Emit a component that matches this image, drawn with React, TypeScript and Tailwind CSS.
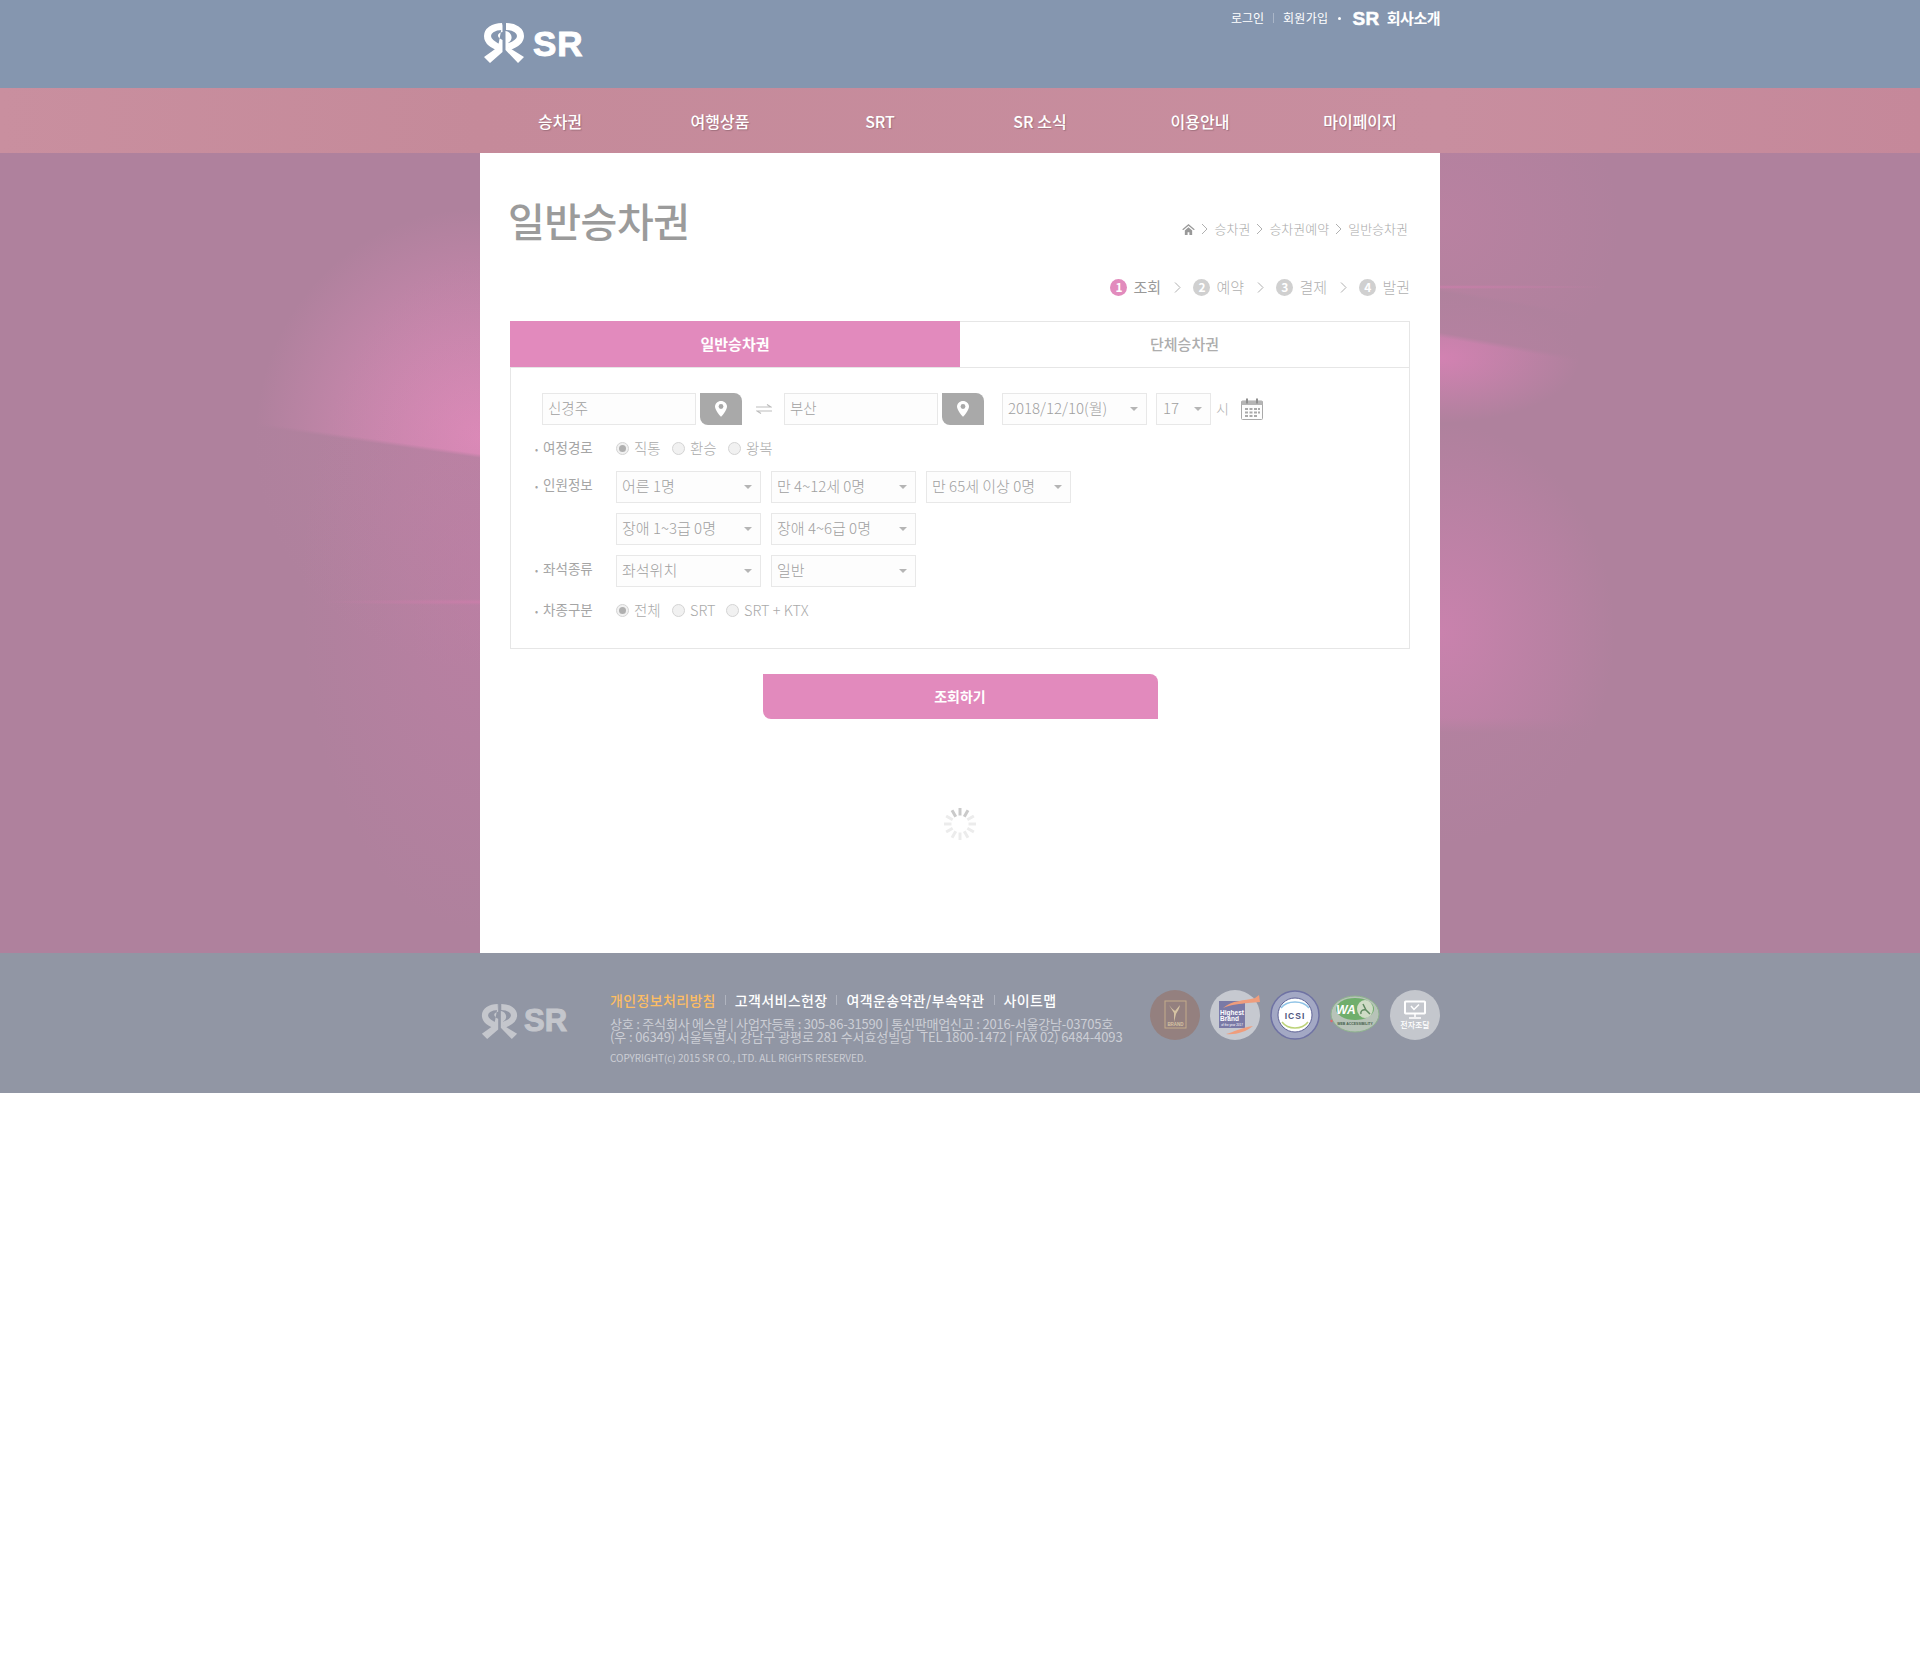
const font = "font-['Noto_Sans_CJK_KR','Noto_Sans',sans-serif]"

function LogoMark({ className, color }: { className: string; color: string }) {
  return (
    <svg viewBox="0 0 42 40" className={className} fill="none">
      <path d="M19 3.500 C10 3.500 4.500 8 4.500 13 C4.500 19 10 22 17 25" stroke={color} strokeWidth="7" />
      <path d="M23 3.500 C32 3.500 37.500 8 37.500 13 C37.500 19 31 22 25 24" stroke={color} strokeWidth="7" />
      <path d="M19.500 0 L19.500 9 C14 10 13 14 19.500 17 L19.500 29 L7 40 L1 34 L15 24 Z" fill={color} />
      <path d="M22.500 8 L22.500 27 L35 40 L41 34 L25 24 L25 20 C31 17 29 9 22.500 8 Z" fill={color} />
    </svg>
  )
}

function Chevron({ className }: { className: string }) {
  return (
    <svg viewBox="0 0 7 12" className={className} fill="none" stroke="#b0b0b0" strokeWidth="1">
      <path d="M1 1 L6 6 L1 11" />
    </svg>
  )
}

function Pin() {
  return (
    <button className="w-[42px] h-[32px] bg-[#a9a9a9] rounded-tr-lg rounded-bl-lg flex items-center justify-center">
      <svg viewBox="0 0 12 16" className="w-[12px] h-[16px]">
        <path d="M6 0 C2.700 0 0 2.500 0 5.600 C0 9.500 6 16 6 16 C6 16 12 9.500 12 5.600 C12 2.500 9.300 0 6 0 Z" fill="#fff" />
        <circle cx="6" cy="5.500" r="2.400" fill="#a9a9a9" />
      </svg>
    </button>
  )
}

function TextBox({ value }: { value: string }) {
  return (
    <div className="w-[154px] h-[32px] bg-[#fdfdfd] border border-[#e8e8e8] pl-[5px] text-[14.500px] font-light leading-[28px] text-[#a0a0a0]">{value}</div>
  )
}

function Select({ value, className }: { value: string; className: string }) {
  return (
    <div className={`h-[32px] bg-[#fdfdfd] border border-[#e8e8e8] pl-[5px] pr-[8px] pb-[2px] flex items-center justify-between text-[15px] font-light text-[#a0a0a0] ${className}`}>
      <span className="whitespace-nowrap">{value}</span>
      <span className="mt-[2px] w-0 h-0 border-x-[4px] border-x-transparent border-t-[4px] border-t-[#b5b5b5]" />
    </div>
  )
}

function Radio({ label, checked, className }: { label: string; checked?: boolean; className: string }) {
  return (
    <div className={`flex items-center gap-[5px] ${className}`}>
      <span className="w-[13px] h-[13px] rounded-full border border-[#d4d4d4] bg-[#f1f1f1] flex items-center justify-center">
        {checked && <span className="w-[7px] h-[7px] rounded-full bg-[#b0b0b0]" />}
      </span>
      <span className="text-[14.500px] font-light text-[#aaaaaa] whitespace-nowrap">{label}</span>
    </div>
  )
}

function RowLabel({ text, className }: { text: string; className?: string }) {
  return (
    <div className={`w-[82px] shrink-0 pl-[1px] text-[13.500px] leading-[20px] text-[#a5a5a5] whitespace-nowrap ${className ?? ''}`}>
      <span className="text-[9px] mr-[5px]">•</span>{text}
    </div>
  )
}

function Step({ n, label, active }: { n: number; label: string; active?: boolean }) {
  return (
    <div className="flex items-center gap-[6px]">
      <span className={`w-[17px] h-[17px] rounded-full flex items-center justify-center text-[12px] font-bold text-white ${active ? 'bg-[#e28bbd]' : 'bg-[#d0d0d0]'}`}>{n}</span>
      <span className={`text-[15px] ${active ? 'text-[#999999] font-normal' : 'text-[#b0b0b0] font-light'}`}>{label}</span>
    </div>
  )
}

function Spinner() {
  return (
    <svg viewBox="0 0 34 34" className="w-[34px] h-[34px] mx-auto mt-[88px]">
      {Array.from({ length: 12 }).map((_, i) => (
        <line
          key={i}
          x1="17"
          y1="1"
          x2="17"
          y2="8.500"
          strokeWidth="3"
          stroke={i === 0 || i === 1 || i === 11 ? '#cacaca' : '#ececec'}
          transform={`rotate(${i * 30} 17 17)`}
        />
      ))}
    </svg>
  )
}

function Badges() {
  return (
    <div className="flex gap-[10px]">
      <svg viewBox="0 0 50 50" className="w-[50px] h-[50px]">
        <circle cx="25" cy="25" r="25" fill="#94807f" />
        <rect x="15" y="11" width="21" height="27" fill="none" stroke="#c4ab8b" strokeWidth="1" />
        <path d="M19 15 C22 19 24 20 25 21 L30 15 C29 20 27 22 26 24 L24 32 L24 23 Z" fill="#d6c3a3" />
        <text x="25.500" y="36" textAnchor="middle" fontSize="4.500" fontWeight="700" fill="#d6c3a3" fontFamily="Liberation Sans">BRAND</text>
      </svg>
      <svg viewBox="0 0 50 50" className="w-[50px] h-[50px] overflow-visible">
        <circle cx="25" cy="25" r="25" fill="#c6c9d0" />
        <rect x="9" y="11" width="26" height="27" fill="#7a7aa6" />
        <path d="M13 18 C22 10 34 11 45 8 L49 5 L50 12 L38 13 C30 14 22 14 13 18 Z" fill="#ef9d7c" />
        <path d="M16 44 C24 42 30 38 43 36 C36 42 25 45 16 44 Z" fill="#ef9d7c" />
        <text x="22" y="25" textAnchor="middle" fontSize="6.500" fontWeight="700" fill="#fff" fontFamily="Liberation Sans">Highest</text>
        <text x="19.500" y="31" textAnchor="middle" fontSize="6.500" fontWeight="700" fill="#fff" fontFamily="Liberation Sans">Brand</text>
        <text x="22" y="36" textAnchor="middle" fontSize="3" fill="#fff" fontFamily="Liberation Sans">of the year 2017</text>
      </svg>
      <svg viewBox="0 0 50 50" className="w-[50px] h-[50px]">
        <circle cx="25" cy="25" r="24" fill="#a3a8c4" stroke="#6f72a3" strokeWidth="1.500" />
        <circle cx="25" cy="25" r="17" fill="#ffffff" stroke="#5e6296" strokeWidth="1" />
        <path d="M11 18 C17 10 33 10 39 18" fill="none" stroke="#8fc3e6" strokeWidth="1.500" />
        <path d="M12 32 C18 40 32 40 38 32" fill="none" stroke="#bdd37a" strokeWidth="1.500" />
        <text x="25" y="28.500" textAnchor="middle" fontSize="8.500" fontWeight="700" letterSpacing="1" fill="#4f5680" fontFamily="Liberation Sans">ICSI</text>
      </svg>
      <svg viewBox="0 0 50 50" className="w-[50px] h-[50px]">
        <ellipse cx="25" cy="24" rx="24" ry="18" fill="#b7c3b8" stroke="#8db28d" strokeWidth="1" />
        <ellipse cx="25" cy="19" rx="19" ry="11" fill="#6fae6c" />
        <ellipse cx="35" cy="19" rx="8" ry="9" fill="#cfdcc6" />
        <path d="M33 14 L36 20 L40 24 M36 20 C33 19 30 21 31 24" fill="none" stroke="#5f8a61" strokeWidth="1.500" />
        <text x="16" y="24" textAnchor="middle" fontSize="12" fontWeight="700" fontStyle="italic" fill="#fff" fontFamily="Liberation Sans">WA</text>
        <text x="25" y="35" textAnchor="middle" fontSize="3.500" fontWeight="700" fill="#465f4c" fontFamily="Liberation Sans">WEB ACCESSIBILITY</text>
        <circle cx="1.500" cy="31" r="1.200" fill="#e0686a" />
      </svg>
      <div className="w-[50px] h-[50px] rounded-full bg-[#c4c7cd] flex flex-col items-center pt-[10px]">
        <svg viewBox="0 0 24 20" className="w-[24px] h-[20px]" fill="none">
          <rect x="1.500" y="1" width="21" height="13" rx="1" fill="#fff" stroke="#fff" />
          <rect x="3" y="2.500" width="18" height="10" fill="#c4c7cd" />
          <path d="M8 6 L11 9.500 L16 4.500" stroke="#fff" strokeWidth="1.500" />
          <path d="M12 14 L12 17 M6 18 L18 18" stroke="#fff" strokeWidth="1.500" />
        </svg>
        <span className="text-[8px] leading-[10px] text-white font-medium">전자조달</span>
      </div>
    </div>
  )
}

export default function App() {
  return (
    <div className={`w-full ${font}`}>
      {/* top bar */}
      <header className="h-[88px] bg-[#8596af]">
        <div className="w-[960px] h-full mx-auto flex justify-between">
          <div className="flex items-center pl-[3px] pb-[2px] gap-[8px]">
            <LogoMark className="w-[42px] h-[40px]" color="#ffffff" />
            <span className="font-['Liberation_Sans',sans-serif] font-bold text-[35px] leading-none text-white tracking-[1px] [-webkit-text-stroke:1px_#ffffff]">SR</span>
          </div>
          <div className="flex items-center h-[36px] text-[12px] text-white">
            <span>로그인</span>
            <span className="w-px h-[10px] bg-[#aab6c8] mx-[9px]" />
            <span className="tracking-[0.300px]">회원가입</span>
            <span className="w-[3px] h-[3px] rounded-full bg-white ml-[10px] mr-[11px]" />
            <span className="font-['Liberation_Sans',sans-serif] font-bold text-[19px] leading-none tracking-[0.500px] mr-[7px] [-webkit-text-stroke:0.500px_#ffffff]">SR</span>
            <span className="text-[15px] font-bold tracking-[-0.500px]">회사소개</span>
          </div>
        </div>
      </header>

      {/* nav */}
      <nav className="h-[65px] bg-[linear-gradient(90deg,#c98f9f,#c58a9a_25%,#c88e9f_75%,#c5889a)]">
        <div className="w-[960px] h-full mx-auto grid grid-cols-6 items-center text-center text-[16px] font-medium text-white [text-shadow:1px_1px_1px_rgba(90,60,70,0.35)]">
          <a>승차권</a>
          <a>여행상품</a>
          <a>SRT</a>
          <a>SR 소식</a>
          <a>이용안내</a>
          <a>마이페이지</a>
        </div>
      </nav>

      {/* body */}
      <main className="h-[800px] flex">
        <div className="flex-1 bg-[#af819d] bg-[image:radial-gradient(ellipse_160px_3px_at_100%_449px,rgba(215,125,175,0.5),transparent),radial-gradient(ellipse_180px_340px_at_100%_440px,rgba(200,125,170,0.42),transparent),linear-gradient(188deg,transparent_298px,rgba(175,129,157,0.85)_302px),radial-gradient(ellipse_225px_230px_at_100%_285px,#e08dbb,transparent)]" />
        <section className="w-[960px] bg-white px-[30px] pt-[44px]">
          <div className="flex justify-between items-end">
            <h1 className="-ml-[2px] text-[40px] leading-[46px] font-medium tracking-[-0.500px] text-[#9b9b9b]">일반승차권</h1>
            <div className="flex items-center gap-[6px] pb-[4px] pr-[2px] text-[13px] font-light leading-[20px] text-[#aaaaaa]">
              <svg viewBox="0 0 14 12" className="w-[13px] h-[11px]">
                <path d="M7 0 L14 6 L12.500 6.500 L7 2 L1.500 6.500 L0 6 Z M3 7 L7 3.500 L11 7 L11 12 L8 12 L8 9 L6 9 L6 12 L3 12 Z" fill="#999999" />
              </svg>
              <Chevron className="w-[7px] h-[12px]" />
              <span>승차권</span>
              <Chevron className="w-[7px] h-[12px]" />
              <span>승차권예약</span>
              <Chevron className="w-[7px] h-[12px]" />
              <span>일반승차권</span>
            </div>
          </div>

          {/* steps */}
          <div className="flex justify-end items-center h-[20px] mt-[34px] gap-[12.700px]">
            <Step n={1} label="조회" active />
            <Chevron className="w-[7px] h-[13px]" />
            <Step n={2} label="예약" />
            <Chevron className="w-[7px] h-[13px]" />
            <Step n={3} label="결제" />
            <Chevron className="w-[7px] h-[13px]" />
            <Step n={4} label="발권" />
          </div>

          {/* form */}
          <div className="mt-[24px] h-[328px] border border-[#e6e6e6]">
            <div className="flex h-[46px] -mt-px -ml-px border-b border-[#e6e6e6] box-content">
              <div className="w-[450px] bg-[#e28abd] text-white text-[15px] font-bold flex items-center justify-center">일반승차권</div>
              <div className="flex-1 text-[#adadad] text-[15px] font-medium flex items-center justify-center">단체승차권</div>
            </div>
            <div className="pl-[23px] pt-[25px]">
              <div className="flex items-center pl-[8px]">
                <TextBox value="신경주" />
                <div className="ml-[4px]"><Pin /></div>
                <svg viewBox="0 0 16 10" className="w-[16px] h-[10px] ml-[14px] mr-[12px]" fill="none" stroke="#bdbdbd" strokeWidth="1.200">
                  <path d="M0 3 L15 3 L11 0.500 M16 7 L1 7 L5 9.500" />
                </svg>
                <TextBox value="부산" />
                <div className="ml-[4px] mr-[18px]"><Pin /></div>
                <Select value="2018/12/10(월)" className="w-[145px]" />
                <Select value="17" className="w-[55px] ml-[9px] pl-[6px]" />
                <span className="ml-[5px] pb-[2px] text-[14px] font-light text-[#b0b0b0]">시</span>
                <svg viewBox="0 0 22 22" className="w-[22px] h-[22px] ml-[12px]">
                  <rect x="0.500" y="3" width="21" height="18.500" rx="1" fill="#fdfdfd" stroke="#a9a9a9" />
                  <rect x="0.500" y="3" width="21" height="4" fill="#b5b5b5" />
                  <rect x="5" y="0.500" width="2" height="5" fill="#8e8e8e" />
                  <rect x="15" y="0.500" width="2" height="5" fill="#8e8e8e" />
                  <path d="M4 10h3v2H4zM8.500 10h3v2h-3zM13 10h3v2h-3zM17 10h2v2h-2zM4 13.500h3v2H4zM8.500 13.500h3v2h-3zM13 13.500h3v2h-3zM17 13.500h2v2h-2zM4 17h3v2H4zM8.500 17h3v2h-3zM13 17h3v2h-3z" fill="#a9a9a9" />
                </svg>
              </div>

              <div className="flex items-center h-[20px] mt-[13px]">
                <RowLabel text="여정경로" />
                <Radio label="직통" checked className="w-[56px]" />
                <Radio label="환승" className="w-[56px]" />
                <Radio label="왕복" className="w-[56px]" />
              </div>

              <div className="flex mt-[13px]">
                <RowLabel text="인원정보" className="pt-[3px]" />
                <div className="flex flex-col gap-[10px]">
                  <div className="flex gap-[10px]">
                    <Select value="어른 1명" className="w-[145px]" />
                    <Select value="만 4~12세 0명" className="w-[145px]" />
                    <Select value="만 65세 이상 0명" className="w-[145px]" />
                  </div>
                  <div className="flex gap-[10px]">
                    <Select value="장애 1~3급 0명" className="w-[145px]" />
                    <Select value="장애 4~6급 0명" className="w-[145px]" />
                  </div>
                </div>
              </div>

              <div className="flex mt-[10px]">
                <RowLabel text="좌석종류" className="pt-[3px]" />
                <div className="flex gap-[10px]">
                  <Select value="좌석위치" className="w-[145px]" />
                  <Select value="일반" className="w-[145px]" />
                </div>
              </div>

              <div className="flex items-center h-[20px] mt-[13px]">
                <RowLabel text="차종구분" />
                <Radio label="전체" checked className="w-[56px]" />
                <Radio label="SRT" className="w-[54px]" />
                <Radio label="SRT + KTX" className="w-[100px]" />
              </div>
            </div>
          </div>

          <button className="block mx-auto mt-[25px] w-[395px] h-[45px] bg-[#e28abd] rounded-tr-lg rounded-bl-lg text-white text-[14px] font-bold">조회하기</button>
          <Spinner />
        </section>
        <div className="flex-1 bg-[#af819d] bg-[image:radial-gradient(ellipse_170px_2px_at_0%_134px,rgba(212,125,175,0.6),transparent),linear-gradient(190deg,transparent_216px,rgba(175,129,157,0.8)_220px,rgba(175,129,157,0.8)_260px,transparent_265px),linear-gradient(180deg,transparent_565px,rgba(175,129,157,0.75)_580px),radial-gradient(ellipse_140px_65px_at_0%_205px,rgba(214,130,180,0.9),transparent),radial-gradient(ellipse_175px_210px_at_0%_480px,rgba(206,130,176,0.85),transparent),radial-gradient(ellipse_180px_170px_at_0%_70px,rgba(195,130,165,0.5),transparent)]" />
      </main>

      {/* footer */}
      <footer className="h-[140px] bg-[#9196a4]">
        <div className="w-[960px] h-full mx-auto flex">
          <div className="w-[130px] pl-[1px] flex items-start pt-[50px] gap-[6px]">
            <LogoMark className="w-[37px] h-[37px]" color="#c4c6cc" />
            <span className="font-['Liberation_Sans',sans-serif] font-bold text-[31px] leading-[36px] text-[#c4c6cc] [-webkit-text-stroke:1px_#c4c6cc]">SR</span>
          </div>
          <div className="w-[520px] pt-[37px]">
            <div className="flex items-center h-[20px] text-[14px] font-medium tracking-[0.350px] text-white">
              <span className="text-[#fdbd63]">개인정보처리방침</span>
              <span className="w-px h-[10px] bg-[#b0b4bf] mx-[9px]" />
              <span>고객서비스헌장</span>
              <span className="w-px h-[10px] bg-[#b0b4bf] mx-[9px]" />
              <span>여객운송약관/부속약관</span>
              <span className="w-px h-[10px] bg-[#b0b4bf] mx-[9px]" />
              <span>사이트맵</span>
            </div>
            <p className="mt-[7px] text-[13px] leading-[13px] tracking-[-0.200px] text-[#ccced5] whitespace-nowrap">상호 : 주식회사 에스알 | 사업자등록 : 305-86-31590 | 통신판매업신고 : 2016-서울강남-03705호</p>
            <p className="text-[13px] leading-[13px] tracking-[-0.110px] text-[#ccced5] whitespace-nowrap">(우 : 06349) 서울특별시 강남구 광평로 281 수서효성빌딩 &nbsp; TEL 1800-1472 | FAX 02) 6484-4093</p>
            <p className="mt-[8px] text-[10px] leading-[14px] tracking-[-0.050px] text-[#ccced5] whitespace-nowrap">COPYRIGHT(c) 2015 SR CO., LTD. ALL RIGHTS RESERVED.</p>
          </div>
          <div className="flex-1 flex justify-end pt-[37px]">
            <Badges />
          </div>
        </div>
      </footer>
    </div>
  )
}
